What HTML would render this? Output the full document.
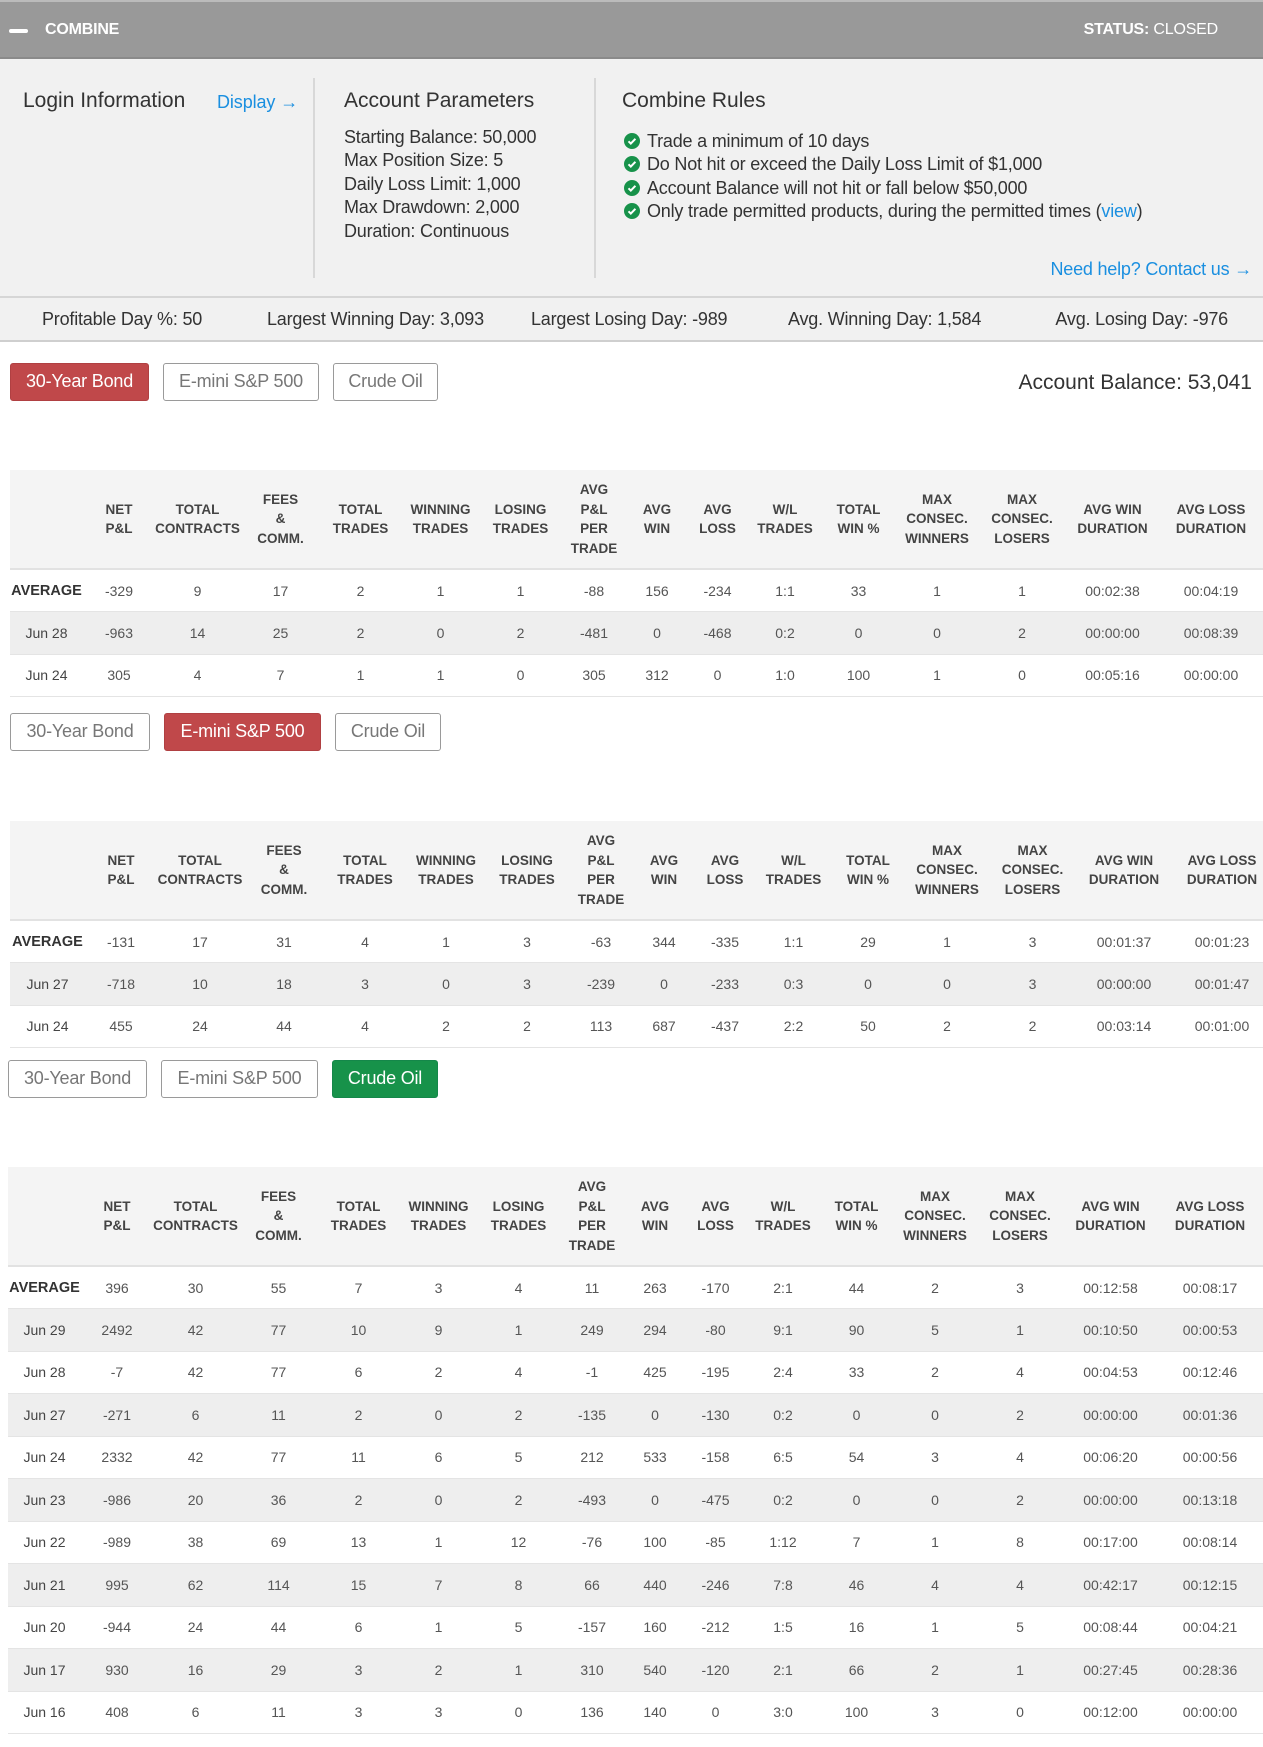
<!DOCTYPE html>
<html><head><meta charset="utf-8">
<style>
*{box-sizing:border-box;margin:0;padding:0}
body{width:1263px;height:1747px;background:#fff;font-family:"Liberation Sans",Arial,sans-serif;color:#333;position:relative;overflow:hidden}
.hdr{position:absolute;left:0;top:0;width:1263px;height:59px;background:#999;border-top:2px solid #bbb;border-bottom:2px solid #8a8a8a}
.hdr .minus{position:absolute;left:9px;top:27px;width:19px;height:4px;background:#fff;border-radius:2px}
.hdr .t{position:absolute;left:45px;top:19px;color:#fff;font-weight:bold;font-size:16px;letter-spacing:-0.2px}
.hdr .s{position:absolute;right:45px;top:19px;color:#fff;font-size:16px;letter-spacing:-0.2px}
.info{position:absolute;left:0;top:59px;width:1263px;height:239px;background:#f1f1f1;border-bottom:2px solid #d6d6d6}
.abs{position:absolute;white-space:nowrap}
.ttl{font-size:21px;color:#333;letter-spacing:0}
.txt{font-size:18px;color:#333;letter-spacing:-0.2px;line-height:23.4px}
.blue{color:#1a8fe0}
.div{position:absolute;width:2px;background:#d8d8d8;top:19px;height:200px}
.chk{display:inline-block;width:16px;height:16px;vertical-align:-2px;margin-right:7px}
.stats{position:absolute;left:0;top:298px;width:1263px;height:44px;background:#f1f1f1;border-bottom:2px solid #cfcfcf}
.stats span{position:absolute;top:11px;font-size:18px;color:#333;letter-spacing:-0.2px;white-space:nowrap}
.btn{position:absolute;height:38px;border:1.5px solid #9a9a9a;border-radius:3px;font-size:18px;color:#777;text-align:center;line-height:35px;letter-spacing:-0.2px;background:#fff;white-space:nowrap}
.btn.red{background:#c0484a;border-color:#b04042;color:#fff}
.btn.green{background:#17924a;border-color:#15874a;color:#fff}
table{position:absolute;border-collapse:collapse;table-layout:fixed}
th{background:#f4f4f4;font-size:13.5px;font-weight:bold;color:#444;text-transform:uppercase;line-height:19.5px;height:99px;border-bottom:2px solid #e2e2e2;text-align:center;vertical-align:middle;letter-spacing:0}
td{font-size:14px;color:#555;text-align:center;height:42.5px;border-bottom:1.5px solid #e4e4e4;letter-spacing:0}
td:first-child{color:#444}
tr.g td{background:#eeeeee}
tr.avg td:first-child{font-weight:bold;color:#333;font-size:14.5px}
</style></head><body>
<div class="hdr"><div class="minus"></div><div class="t">COMBINE</div><div class="s"><b>STATUS:</b> CLOSED</div></div>
<div class="info">
  <div class="abs ttl" style="left:23px;top:30px">Login Information</div>
  <div class="abs blue" style="left:217px;top:33px;font-size:18px;letter-spacing:-0.1px">Display →</div>
  <div class="div" style="left:313px"></div>
  <div class="abs ttl" style="left:344px;top:30px">Account Parameters</div>
  <div class="abs txt" style="left:344px;top:67px">Starting Balance: 50,000<br>Max Position Size: 5<br>Daily Loss Limit: 1,000<br>Max Drawdown: 2,000<br>Duration: Continuous</div>
  <div class="div" style="left:594px"></div>
  <div class="abs ttl" style="left:622px;top:30px">Combine Rules</div>
  <div class="abs txt" style="left:624px;top:71px">
  <div><svg class="chk" viewBox="0 0 16 16"><circle cx="8" cy="8" r="8" fill="#17924a"/><path d="M4.5 8.3l2.3 2.3 4.6-4.8" stroke="#fff" stroke-width="2" fill="none"/></svg>Trade a minimum of 10 days</div>
  <div><svg class="chk" viewBox="0 0 16 16"><circle cx="8" cy="8" r="8" fill="#17924a"/><path d="M4.5 8.3l2.3 2.3 4.6-4.8" stroke="#fff" stroke-width="2" fill="none"/></svg>Do Not hit or exceed the Daily Loss Limit of $1,000</div>
  <div><svg class="chk" viewBox="0 0 16 16"><circle cx="8" cy="8" r="8" fill="#17924a"/><path d="M4.5 8.3l2.3 2.3 4.6-4.8" stroke="#fff" stroke-width="2" fill="none"/></svg>Account Balance will not hit or fall below $50,000</div>
  <div><svg class="chk" viewBox="0 0 16 16"><circle cx="8" cy="8" r="8" fill="#17924a"/><path d="M4.5 8.3l2.3 2.3 4.6-4.8" stroke="#fff" stroke-width="2" fill="none"/></svg>Only trade permitted products, during the permitted times (<span class="blue">view</span>)</div>
  </div>
  <div class="abs blue" style="right:11px;top:200px;font-size:18px;letter-spacing:-0.2px">Need help? Contact us →</div>
</div>
<div class="stats">
<span style="left:42px">Profitable Day %: 50</span>
<span style="left:267px">Largest Winning Day: 3,093</span>
<span style="left:531px">Largest Losing Day: -989</span>
<span style="left:788px">Avg. Winning Day: 1,584</span>
<span style="right:35px">Avg. Losing Day: -976</span>
</div>

<div class="btn red" style="left:10px;top:363px;width:139px">30-Year Bond</div>
<div class="btn" style="left:163px;top:363px;width:156px">E-mini S&amp;P 500</div>
<div class="btn" style="left:333px;top:363px;width:105px">Crude Oil</div>
<div class="abs" style="right:11px;top:371px;font-size:21px;color:#333;letter-spacing:0">Account Balance: 53,041</div>

<table style="left:10px;top:470px;width:1253px">
<colgroup><col style="width:73px"><col style="width:72px"><col style="width:85px"><col style="width:81px"><col style="width:79px"><col style="width:81px"><col style="width:79px"><col style="width:68px"><col style="width:58px"><col style="width:63px"><col style="width:72px"><col style="width:75px"><col style="width:82px"><col style="width:88px"><col style="width:93px"><col style="width:104px"></colgroup>
<tr><th></th><th>Net<br>P&amp;L</th><th>Total<br>Contracts</th><th>Fees<br>&amp;<br>Comm.</th><th>Total<br>Trades</th><th>Winning<br>Trades</th><th>Losing<br>Trades</th><th>Avg<br>P&amp;L<br>Per<br>Trade</th><th>Avg<br>Win</th><th>Avg<br>Loss</th><th>W/L<br>Trades</th><th>Total<br>Win %</th><th>Max<br>Consec.<br>Winners</th><th>Max<br>Consec.<br>Losers</th><th>Avg Win<br>Duration</th><th>Avg Loss<br>Duration</th></tr>
<tr class="avg"><td>AVERAGE</td><td>-329</td><td>9</td><td>17</td><td>2</td><td>1</td><td>1</td><td>-88</td><td>156</td><td>-234</td><td>1:1</td><td>33</td><td>1</td><td>1</td><td>00:02:38</td><td>00:04:19</td></tr>
<tr class="g"><td>Jun 28</td><td>-963</td><td>14</td><td>25</td><td>2</td><td>0</td><td>2</td><td>-481</td><td>0</td><td>-468</td><td>0:2</td><td>0</td><td>0</td><td>2</td><td>00:00:00</td><td>00:08:39</td></tr>
<tr><td>Jun 24</td><td>305</td><td>4</td><td>7</td><td>1</td><td>1</td><td>0</td><td>305</td><td>312</td><td>0</td><td>1:0</td><td>100</td><td>1</td><td>0</td><td>00:05:16</td><td>00:00:00</td></tr>
</table>

<div class="btn" style="left:10px;top:713px;width:140px">30-Year Bond</div>
<div class="btn red" style="left:164px;top:713px;width:157px">E-mini S&amp;P 500</div>
<div class="btn" style="left:335px;top:713px;width:106px">Crude Oil</div>

<table style="left:10px;top:821px;width:1263px">
<colgroup><col style="width:75px"><col style="width:72px"><col style="width:86px"><col style="width:82px"><col style="width:80px"><col style="width:82px"><col style="width:80px"><col style="width:68px"><col style="width:58px"><col style="width:64px"><col style="width:73px"><col style="width:76px"><col style="width:82px"><col style="width:89px"><col style="width:94px"><col style="width:102px"></colgroup>
<tr><th></th><th>Net<br>P&amp;L</th><th>Total<br>Contracts</th><th>Fees<br>&amp;<br>Comm.</th><th>Total<br>Trades</th><th>Winning<br>Trades</th><th>Losing<br>Trades</th><th>Avg<br>P&amp;L<br>Per<br>Trade</th><th>Avg<br>Win</th><th>Avg<br>Loss</th><th>W/L<br>Trades</th><th>Total<br>Win %</th><th>Max<br>Consec.<br>Winners</th><th>Max<br>Consec.<br>Losers</th><th>Avg Win<br>Duration</th><th>Avg Loss<br>Duration</th></tr>
<tr class="avg"><td>AVERAGE</td><td>-131</td><td>17</td><td>31</td><td>4</td><td>1</td><td>3</td><td>-63</td><td>344</td><td>-335</td><td>1:1</td><td>29</td><td>1</td><td>3</td><td>00:01:37</td><td>00:01:23</td></tr>
<tr class="g"><td>Jun 27</td><td>-718</td><td>10</td><td>18</td><td>3</td><td>0</td><td>3</td><td>-239</td><td>0</td><td>-233</td><td>0:3</td><td>0</td><td>0</td><td>3</td><td>00:00:00</td><td>00:01:47</td></tr>
<tr><td>Jun 24</td><td>455</td><td>24</td><td>44</td><td>4</td><td>2</td><td>2</td><td>113</td><td>687</td><td>-437</td><td>2:2</td><td>50</td><td>2</td><td>2</td><td>00:03:14</td><td>00:01:00</td></tr>
</table>

<div class="btn" style="left:8px;top:1060px;width:139px">30-Year Bond</div>
<div class="btn" style="left:161px;top:1060px;width:157px">E-mini S&amp;P 500</div>
<div class="btn green" style="left:332px;top:1060px;width:106px">Crude Oil</div>

<table style="left:8px;top:1167px;width:1255px">
<colgroup><col style="width:73px"><col style="width:72px"><col style="width:85px"><col style="width:81px"><col style="width:79px"><col style="width:81px"><col style="width:79px"><col style="width:68px"><col style="width:58px"><col style="width:63px"><col style="width:72px"><col style="width:75px"><col style="width:82px"><col style="width:88px"><col style="width:93px"><col style="width:106px"></colgroup>
<tr><th></th><th>Net<br>P&amp;L</th><th>Total<br>Contracts</th><th>Fees<br>&amp;<br>Comm.</th><th>Total<br>Trades</th><th>Winning<br>Trades</th><th>Losing<br>Trades</th><th>Avg<br>P&amp;L<br>Per<br>Trade</th><th>Avg<br>Win</th><th>Avg<br>Loss</th><th>W/L<br>Trades</th><th>Total<br>Win %</th><th>Max<br>Consec.<br>Winners</th><th>Max<br>Consec.<br>Losers</th><th>Avg Win<br>Duration</th><th>Avg Loss<br>Duration</th></tr>
<tr class="avg"><td>AVERAGE</td><td>396</td><td>30</td><td>55</td><td>7</td><td>3</td><td>4</td><td>11</td><td>263</td><td>-170</td><td>2:1</td><td>44</td><td>2</td><td>3</td><td>00:12:58</td><td>00:08:17</td></tr>
<tr class="g"><td>Jun 29</td><td>2492</td><td>42</td><td>77</td><td>10</td><td>9</td><td>1</td><td>249</td><td>294</td><td>-80</td><td>9:1</td><td>90</td><td>5</td><td>1</td><td>00:10:50</td><td>00:00:53</td></tr>
<tr><td>Jun 28</td><td>-7</td><td>42</td><td>77</td><td>6</td><td>2</td><td>4</td><td>-1</td><td>425</td><td>-195</td><td>2:4</td><td>33</td><td>2</td><td>4</td><td>00:04:53</td><td>00:12:46</td></tr>
<tr class="g"><td>Jun 27</td><td>-271</td><td>6</td><td>11</td><td>2</td><td>0</td><td>2</td><td>-135</td><td>0</td><td>-130</td><td>0:2</td><td>0</td><td>0</td><td>2</td><td>00:00:00</td><td>00:01:36</td></tr>
<tr><td>Jun 24</td><td>2332</td><td>42</td><td>77</td><td>11</td><td>6</td><td>5</td><td>212</td><td>533</td><td>-158</td><td>6:5</td><td>54</td><td>3</td><td>4</td><td>00:06:20</td><td>00:00:56</td></tr>
<tr class="g"><td>Jun 23</td><td>-986</td><td>20</td><td>36</td><td>2</td><td>0</td><td>2</td><td>-493</td><td>0</td><td>-475</td><td>0:2</td><td>0</td><td>0</td><td>2</td><td>00:00:00</td><td>00:13:18</td></tr>
<tr><td>Jun 22</td><td>-989</td><td>38</td><td>69</td><td>13</td><td>1</td><td>12</td><td>-76</td><td>100</td><td>-85</td><td>1:12</td><td>7</td><td>1</td><td>8</td><td>00:17:00</td><td>00:08:14</td></tr>
<tr class="g"><td>Jun 21</td><td>995</td><td>62</td><td>114</td><td>15</td><td>7</td><td>8</td><td>66</td><td>440</td><td>-246</td><td>7:8</td><td>46</td><td>4</td><td>4</td><td>00:42:17</td><td>00:12:15</td></tr>
<tr><td>Jun 20</td><td>-944</td><td>24</td><td>44</td><td>6</td><td>1</td><td>5</td><td>-157</td><td>160</td><td>-212</td><td>1:5</td><td>16</td><td>1</td><td>5</td><td>00:08:44</td><td>00:04:21</td></tr>
<tr class="g"><td>Jun 17</td><td>930</td><td>16</td><td>29</td><td>3</td><td>2</td><td>1</td><td>310</td><td>540</td><td>-120</td><td>2:1</td><td>66</td><td>2</td><td>1</td><td>00:27:45</td><td>00:28:36</td></tr>
<tr><td>Jun 16</td><td>408</td><td>6</td><td>11</td><td>3</td><td>3</td><td>0</td><td>136</td><td>140</td><td>0</td><td>3:0</td><td>100</td><td>3</td><td>0</td><td>00:12:00</td><td>00:00:00</td></tr>
</table>
</body></html>
